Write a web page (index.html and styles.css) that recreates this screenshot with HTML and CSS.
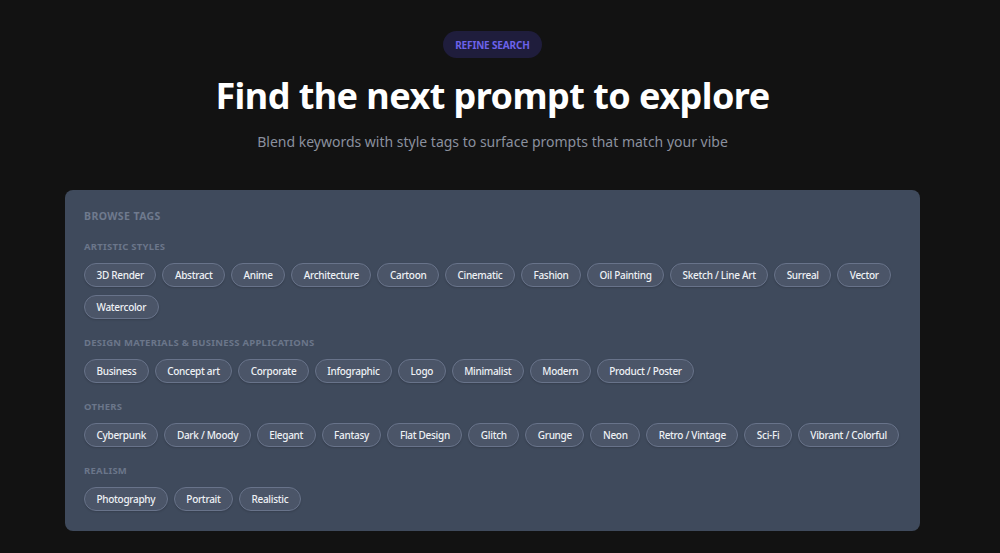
FILE: index.html
```html
<!DOCTYPE html>
<html lang="en">
<head>
<meta charset="utf-8">
<title>Refine search</title>
<link rel="stylesheet" href="styles.css">
</head>
<body>
<main class="page">
  <header class="hero">
    <span class="badge">Refine search</span>
    <h1 class="title">Find the next prompt to explore</h1>
    <p class="subtitle">Blend keywords with style tags to surface prompts that match your vibe</p>
  </header>
  <section class="panel">
    <h2 class="panel-title">Browse tags</h2>
    <div class="group">
      <h3 class="group-label">Artistic styles</h3>
      <div class="chips">
        <button class="chip">3D Render</button>
        <button class="chip">Abstract</button>
        <button class="chip">Anime</button>
        <button class="chip">Architecture</button>
        <button class="chip">Cartoon</button>
        <button class="chip">Cinematic</button>
        <button class="chip">Fashion</button>
        <button class="chip">Oil Painting</button>
        <button class="chip">Sketch / Line Art</button>
        <button class="chip">Surreal</button>
        <button class="chip">Vector</button>
        <button class="chip">Watercolor</button>
      </div>
    </div>
    <div class="group">
      <h3 class="group-label">Design Materials &amp; Business Applications</h3>
      <div class="chips">
        <button class="chip">Business</button>
        <button class="chip">Concept art</button>
        <button class="chip">Corporate</button>
        <button class="chip">Infographic</button>
        <button class="chip">Logo</button>
        <button class="chip">Minimalist</button>
        <button class="chip">Modern</button>
        <button class="chip">Product / Poster</button>
      </div>
    </div>
    <div class="group">
      <h3 class="group-label">Others</h3>
      <div class="chips">
        <button class="chip">Cyberpunk</button>
        <button class="chip">Dark / Moody</button>
        <button class="chip">Elegant</button>
        <button class="chip">Fantasy</button>
        <button class="chip">Flat Design</button>
        <button class="chip">Glitch</button>
        <button class="chip">Grunge</button>
        <button class="chip">Neon</button>
        <button class="chip">Retro / Vintage</button>
        <button class="chip">Sci-Fi</button>
        <button class="chip">Vibrant / Colorful</button>
      </div>
    </div>
    <div class="group">
      <h3 class="group-label">Realism</h3>
      <div class="chips">
        <button class="chip">Photography</button>
        <button class="chip">Portrait</button>
        <button class="chip">Realistic</button>
      </div>
    </div>
  </section>
</main>
</body>
</html>
```

FILE: styles.css
```css
* { box-sizing: border-box; }
html, body {
  margin: 0;
  padding: 0;
  background: #121212;
  font-family: "Noto Sans", "Open Sans", sans-serif;
  color: #fff;
}
.page {
  padding: 31px 15px 0 0;
  display: flex;
  flex-direction: column;
  align-items: center;
}
.hero {
  display: flex;
  flex-direction: column;
  align-items: center;
}
.badge {
  display: inline-flex;
  align-items: center;
  height: 27px;
  padding: 0 12px;
  border-radius: 14px;
  background: #1f1d3c;
  color: #6c62ea;
  font-size: 10px;
  font-weight: 700;
  letter-spacing: -0.15px;
  text-transform: uppercase;
}
.title {
  margin: 16px 0 0;
  font-size: 36px;
  line-height: 44px;
  font-weight: 700;
  color: #ffffff;
  letter-spacing: -0.55px;
}
.subtitle {
  margin: 13px 0 0;
  font-size: 14px;
  line-height: 22px;
  color: #8a909e;
}
.panel {
  margin-top: 37px;
  width: 855px;
  background: #3f4a5c;
  border-radius: 8px;
  padding: 18px 12px 20px 19px;
}
.panel-title {
  margin: 0;
  font-size: 10.5px;
  line-height: 16px;
  font-weight: 700;
  letter-spacing: 0.4px;
  text-transform: uppercase;
  color: #6f7a8e;
}
.group { margin-top: 16px; }
.group + .group { margin-top: 17px; }
.group-label {
  margin: 0 0 9px;
  font-size: 9.5px;
  line-height: 14px;
  font-weight: 700;
  letter-spacing: 0.25px;
  text-transform: uppercase;
  color: #6b768a;
}
.chips {
  display: flex;
  flex-wrap: wrap;
  gap: 8px 6px;
}
.chip {
  height: 24px;
  padding: 0 11.5px;
  border: 1px solid #68738a;
  border-radius: 12px;
  background: #4b5568;
  color: #eef1f5;
  font-family: inherit;
  font-size: 10px;
  font-weight: 500;
  letter-spacing: -0.3px;
  line-height: 22px;
  box-shadow: 0 1px 2px rgba(0,0,0,0.15);
}
```
